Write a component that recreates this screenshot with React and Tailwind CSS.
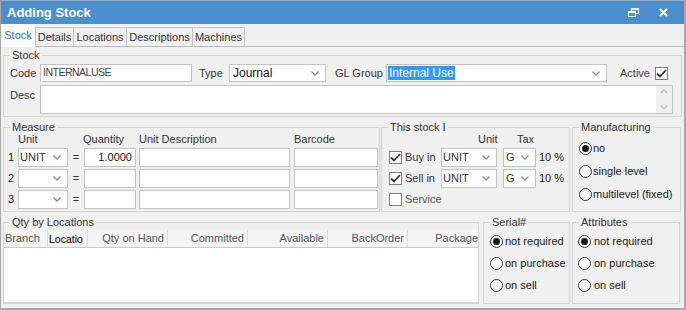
import React from 'react';

function Chevron({ color = '#8c8c8c' }) {
  return (
    <svg width="8" height="5" viewBox="0 0 8 5" className="shrink-0">
      <path d="M0.5 0.5 L4 4 L7.5 0.5" fill="none" stroke={color} strokeWidth="1.3" />
    </svg>
  );
}

function Select({ value, className = '', textClass = 'text-[11px] text-[#333]', h = 'h-[19px]' }) {
  return (
    <div className={`flex ${h} items-center justify-between border border-[#c3c3c3] bg-white pr-[6px] ${className}`}>
      <span className={`leading-none ${textClass}`}>{value}</span>
      <Chevron />
    </div>
  );
}

function Input({ value = '', className = '', h = 'h-[19px]' }) {
  return (
    <div className={`flex ${h} items-center border border-[#c3c3c3] bg-white ${className}`}>
      {value}
    </div>
  );
}

function Checkbox({ checked }) {
  return (
    <div className="flex h-[13px] w-[13px] shrink-0 items-center justify-center border border-[#7f7f7f] bg-white">
      {checked && (
        <svg width="11" height="9" viewBox="0 0 11 9">
          <path d="M1 4.5 L4 7.5 L10 1" fill="none" stroke="#333" strokeWidth="1.8" />
        </svg>
      )}
    </div>
  );
}

function Radio({ checked }) {
  return (
    <div className="flex h-[13px] w-[13px] shrink-0 items-center justify-center rounded-full border border-[#333] bg-white">
      {checked && <div className="h-[7px] w-[7px] rounded-full bg-[#1a1a1a]" />}
    </div>
  );
}

function Group({ title, className = '', children }) {
  return (
    <fieldset className={`min-w-0 border border-[#d2d2d2] ${className}`}>
      <legend className="ml-[6px] px-[2px] text-[11px] leading-[12px] text-[#333]">{title}</legend>
      {children}
    </fieldset>
  );
}

function RadioList({ options, selected, pad = 'pl-[7px]', gap = 'gap-[2px]', rowH = 'h-[22px]', className = '' }) {
  return (
    <div className={`flex flex-col ${pad} ${className}`}>
      {options.map((option) => (
        <div key={option} className={`flex ${rowH} items-center ${gap} whitespace-nowrap text-[11px] text-[#1a1a1a]`}>
          <Radio checked={option === selected} />
          <span>{option}</span>
        </div>
      ))}
    </div>
  );
}

const tabs = [
  { label: 'Details', w: 'w-[39px] border-l' },
  { label: 'Locations', w: 'w-[53px]' },
  { label: 'Descriptions', w: 'w-[66px]' },
  { label: 'Machines', w: 'w-[52px]' },
];

const columns = ['Qty on Hand', 'Committed', 'Available', 'BackOrder'];

export default function App() {
  return (
    <div className="flex h-[310px] w-[686px] flex-col overflow-hidden border-t border-r-2 border-b-2 border-l border-[#a8a8a8] bg-[#f0f0f0] font-['Liberation_Sans',Arial,sans-serif] text-[#333]">
      {/* title bar */}
      <div className="flex h-[23px] shrink-0 items-center justify-between bg-[#4b8fcc] pl-[6px] pr-[16px]">
        <span className="text-[13px] font-bold text-white">Adding Stock</span>
        <div className="flex items-center gap-[20px]">
          <svg width="11" height="9" viewBox="0 0 11 9">
            <rect x="3.5" y="0.5" width="7" height="5" fill="none" stroke="#fff" />
            <rect x="3" y="0" width="8" height="2" fill="#fff" />
            <rect x="0" y="3" width="8" height="6" fill="#4b8fcc" />
            <rect x="0.5" y="3.5" width="7" height="5" fill="none" stroke="#fff" />
            <rect x="0" y="3" width="8" height="2" fill="#fff" />
          </svg>
          <svg width="9" height="9" viewBox="0 0 9 9">
            <path d="M1 1 L8 8 M8 1 L1 8" stroke="#fff" strokeWidth="2" />
          </svg>
        </div>
      </div>

      {/* tabs */}
      <div className="flex h-[23px] shrink-0 items-end border-b border-[#bcbcbc]">
        <div className="relative -mb-px flex h-[23px] w-[34px] items-center justify-center bg-[#fbfbfb] text-[11px] text-[#1f78cf]">
          Stock
        </div>
        {tabs.map((tab) => (
          <div
            key={tab.label}
            className={`flex h-[19px] items-center justify-center border-t border-r border-[#c4c4c4] bg-[#f0f0f0] text-[11px] text-[#333] ${tab.w}`}
          >
            {tab.label}
          </div>
        ))}
      </div>

      <div className="flex flex-col px-[2px] pt-[2px]">
        {/* stock */}
        <Group title="Stock">
          <div className="flex flex-col gap-[3px] pt-[3px] pb-[2px] pl-[6px]">
            <div className="flex h-[18px] items-center text-[11px]">
              <span className="w-[30px]">Code</span>
              <Input h="h-[18px]" className="w-[152px] pl-[2px] text-[10.5px] tracking-[-0.5px] text-[#444]" value="INTERNALUSE" />
              <span className="ml-[7px] w-[30px]">Type</span>
              <Select h="h-[18px]" className="w-[97px] pl-[3px]" textClass="text-[12px] text-[#111]" value="Journal" />
              <span className="ml-[9px] w-[51px]">GL Group</span>
              <Select
                h="h-[18px]"
                className="w-[221px] pl-[1px]"
                textClass="text-[12px]"
                value={<span className="bg-[#3399ff] px-px text-white">Internal Use</span>}
              />
              <span className="ml-[13px] w-[35px] text-[#444]">Active</span>
              <Checkbox checked />
            </div>
            <div className="flex items-start text-[11px]">
              <span className="w-[30px] pt-[2px]">Desc</span>
              <div className="flex h-[29px] w-[633px] justify-end border border-[#c3c3c3] bg-white">
                <div className="flex w-[16px] flex-col items-center justify-between bg-[#f0f0f0] py-[3px]">
                  <svg width="8" height="5" viewBox="0 0 8 5">
                    <path d="M0.5 4.5 L4 1 L7.5 4.5" fill="none" stroke="#c0c0c0" strokeWidth="1.3" />
                  </svg>
                  <Chevron color="#c0c0c0" />
                </div>
              </div>
            </div>
          </div>
        </Group>

        {/* measure / this stock / manufacturing */}
        <div className="mt-[4px] flex">
          <Group title="Measure" className="w-[377px]">
            <div className="flex flex-col pb-[2px] pl-[4px] text-[11px]">
              <div className="mb-[3px] flex leading-[12px]">
                <span className="w-[10px]" />
                <span className="w-[65px]">Unit</span>
                <span className="w-[56px]">Quantity</span>
                <span className="w-[155px]">Unit Description</span>
                <span>Barcode</span>
              </div>
              <div className="flex flex-col gap-[2px]">
                {['1', '2', '3'].map((n) => (
                  <div key={n} className="flex items-center">
                    <span className="w-[10px] text-[#1a1a1a]">{n}</span>
                    <Select className="w-[50px] pl-[1px]" value={n === '1' ? 'UNIT' : ''} />
                    <span className="w-[16px] text-center">=</span>
                    {n === '1' ? (
                      <Input className="w-[52px] justify-end bg-[#f0f0f0] pr-[3px] text-[#1a1a1a]" value="1.0000" />
                    ) : (
                      <Input className="w-[52px]" />
                    )}
                    <Input className="ml-[3px] w-[151px]" />
                    <Input className="ml-[4px] w-[84px]" />
                  </div>
                ))}
              </div>
            </div>
          </Group>

          <Group title="This stock I" className="ml-px w-[189px]">
            <div className="flex flex-col text-[11px]">
              <div className="mb-[3px] flex pl-[96px] leading-[12px]">
                <span className="w-[39px]">Unit</span>
                <span>Tax</span>
              </div>
              <div className="flex flex-col gap-[2px] pl-[7px]">
                {['Buy in', 'Sell in'].map((label) => (
                  <div key={label} className="flex items-center">
                    <Checkbox checked />
                    <span className="ml-[3px] w-[36px]">{label}</span>
                    <Select className="w-[56px] pl-[1px]" value="UNIT" />
                    <Select className="ml-[6px] w-[33px] pl-[2px]" value="G" />
                    <span className="ml-[3px] text-[#1a1a1a]">10 %</span>
                  </div>
                ))}
                <div className="flex h-[19px] items-center">
                  <Checkbox />
                  <span className="ml-[3px] text-[#555]">Service</span>
                </div>
              </div>
            </div>
          </Group>

          <Group title="Manufacturing" className="ml-[2px] w-[109px]">
            <RadioList
              options={['no', 'single level', 'multilevel (fixed)']}
              selected="no"
              pad="pl-[6px]"
              gap="gap-px"
              rowH="h-[23px]"
              className="pt-[4px]"
            />
          </Group>
        </div>

        {/* qty by locations / serial / attributes */}
        <div className="mt-[4px] flex">
          <Group title="Qty by Locations" className="w-[476px] shrink-0">
            <div className="pt-[2px]">
              <div className="flex h-[73px] flex-col overflow-hidden border-b border-[#d8d8d8] bg-white text-[11px]">
                <div className="flex h-[18px] shrink-0 border-b border-[#c9c9c9] bg-[#f4f4f4] text-[#555]">
                  <div className="flex w-[44px] shrink-0 items-center border-r border-[#dadada] pl-px">Branch</div>
                  <div className="flex w-[40px] shrink-0 items-start border-r border-[#dadada] pt-[2px] pl-[1px] text-[10.5px] text-black">
                    Locatio
                  </div>
                  {columns.map((label) => (
                    <div
                      key={label}
                      className="flex w-[80px] shrink-0 items-center justify-end border-r border-[#dadada] pr-[3px] whitespace-nowrap"
                    >
                      {label}
                    </div>
                  ))}
                  <div className="flex min-w-0 flex-1 items-center justify-end whitespace-nowrap">Package</div>
                </div>
              </div>
            </div>
          </Group>

          <Group title="Serial#" className="ml-[4px] w-[87px] shrink-0">
            <RadioList
              options={['not required', 'on purchase', 'on sell']}
              selected="not required"
              pad="pl-[6px]"
              className="pt-[2px] pb-[5px]"
            />
          </Group>

          <Group title="Attributes" className="ml-[2px] w-[108px] shrink-0">
            <RadioList
              options={['not required', 'on purchase', 'on sell']}
              selected="not required"
              pad="pl-[5px]"
              gap="gap-[3px]"
              className="pt-[2px] pb-[5px]"
            />
          </Group>
        </div>
      </div>
    </div>
  );
}
